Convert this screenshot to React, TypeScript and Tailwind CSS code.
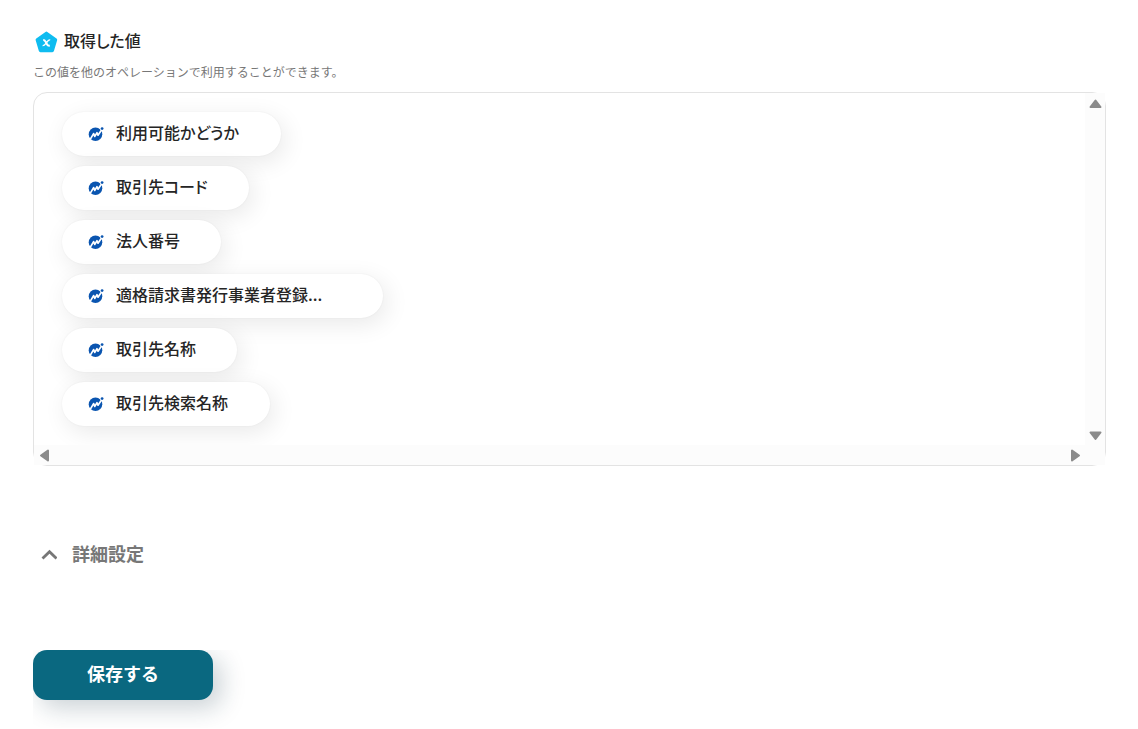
import { useState } from "react";

const values = [
  { label: "利用可能かどうか", width: "w-[125px]" },
  { label: "取引先コード", width: "w-[93px]" },
  { label: "法人番号", width: "w-[65px]" },
  { label: "適格請求書発行事業者登録...", width: "w-[227px]" },
  { label: "取引先名称", width: "w-[81px]" },
  { label: "取引先検索名称", width: "w-[114px]" },
];

function VariableIcon() {
  return (
    <svg viewBox="0 0 24 24" className="size-6 shrink-0" aria-hidden="true">
      <path
        d="M12.4 3.2 21.6 9.8 18.4 20.6H6.4L3.2 9.8Z"
        fill="#0fbcf0"
        stroke="#0fbcf0"
        strokeWidth="3.2"
        strokeLinejoin="round"
      />
      <path d="M9.2 9.9C10.6 9.9 10.9 10.4 11.5 11.6L13.1 14.5C13.6 15.5 14.2 15.8 15.8 15.6" fill="none" stroke="white" strokeWidth="2" />
      <path
        d="M16.2 9.9C14.6 9.6 14.2 10.4 12.4 12.7S10.2 15.9 8.6 15.6"
        fill="none"
        stroke="white"
        strokeWidth="1.4"
      />
    </svg>
  );
}

function ServiceIcon() {
  return (
    <svg viewBox="0 0 16 16" className="size-4 shrink-0" aria-hidden="true">
      <circle cx="7.5" cy="8.2" r="6.8" fill="#0a55b0" />
      <path
        d="M2.8 12.4 5.6 7.6 6.8 10.4 9 6.7 10 9.2 13 4.8"
        fill="none"
        stroke="white"
        strokeWidth="1.7"
        strokeLinecap="round"
        strokeLinejoin="round"
      />
      <circle cx="14" cy="2.6" r="1.9" fill="white" />
      <circle cx="14.1" cy="2.6" r="1.4" fill="#0a55b0" />
    </svg>
  );
}

function Arrow({ path, label }: { path: string; label: string }) {
  return (
    <button type="button" aria-label={label} className="flex size-5 items-center justify-center">
      <svg viewBox="0 0 20 20" className="size-5" fill="#8b8b8b" stroke="#8b8b8b" strokeWidth="2" strokeLinejoin="round">
        <path d={path} />
      </svg>
    </button>
  );
}

export default function App() {
  const [open, setOpen] = useState(true);
  return (
    <main className="bg-white pt-7 pr-8 pl-[33px] font-['Noto_Sans_CJK_JP',sans-serif] text-[#252525]">
      <section>
        <h2 className="flex h-7 items-center gap-[6px] pl-[1px] text-base font-medium [font-feature-settings:'palt']">
          <VariableIcon />
          <span className="pb-[5px] leading-6">取得した値</span>
        </h2>
        <p className="mt-[6px] text-xs leading-5 text-[#777]">
          この値を他のオペレーションで利用することができます。
        </p>

        <div className="mt-[10px] grid grid-cols-[minmax(0,1fr)_20px] rounded-[14px] border border-[#e3e3e3]">
          <ul className="flex flex-col items-start gap-[10px] overflow-hidden rounded-tl-[14px] px-7 pt-[19px] pb-[19px]">
            {values.map(({ label, width }) => (
              <li
                key={label}
                className="flex h-11 items-center gap-3 rounded-full bg-white pr-10 pl-[26px] shadow-[0_0_2px_rgba(0,0,0,0.06),4px_6px_24px_rgba(0,0,0,0.09)]"
              >
                <ServiceIcon />
                <span
                  className={`${width} pb-[5px] text-base leading-6 font-medium whitespace-nowrap [font-feature-settings:'palt']`}
                >
                  {label}
                </span>
              </li>
            ))}
          </ul>
          <div className="flex flex-col justify-between bg-[#fcfcfc]">
            <Arrow label="上へスクロール" path="M10.5 7.5 15.5 14H5.5Z" />
            <Arrow label="下へスクロール" path="M5.5 7.5H15.5L10.5 14Z" />
          </div>
          <div className="flex justify-between bg-[#fcfcfc]">
            <Arrow label="左へスクロール" path="M14 5.5V15.5L7 10.5Z" />
            <Arrow label="右へスクロール" path="M7 5.5V15.5L14 10.5Z" />
          </div>
          <div className="bg-[#fcfcfc]" />
        </div>
      </section>

      <button
        type="button"
        aria-expanded={open}
        onClick={() => setOpen(!open)}
        className="mt-[74px] flex h-7 items-center gap-[15px] pl-2 text-lg font-bold text-[#777]"
      >
        <svg
          viewBox="0 0 16 16"
          className={open ? "size-4" : "size-4 rotate-180"}
          fill="none"
          stroke="#777"
          strokeWidth="2.8"
          aria-hidden="true"
        >
          <path d="M1.5 12.5 8.5 5.7 15.5 12.5" />
        </svg>
        <span className="pb-[3px] leading-6">詳細設定</span>
      </button>

      <div className="mt-[82px] overflow-hidden pb-7">
        <button
          type="button"
          className="h-[50px] w-[180px] rounded-[14px] bg-[#0a6880] pb-[5px] text-lg font-bold text-white shadow-[8px_8px_24px_rgba(20,50,70,0.22)]"
        >
          保存する
        </button>
      </div>
    </main>
  );
}
